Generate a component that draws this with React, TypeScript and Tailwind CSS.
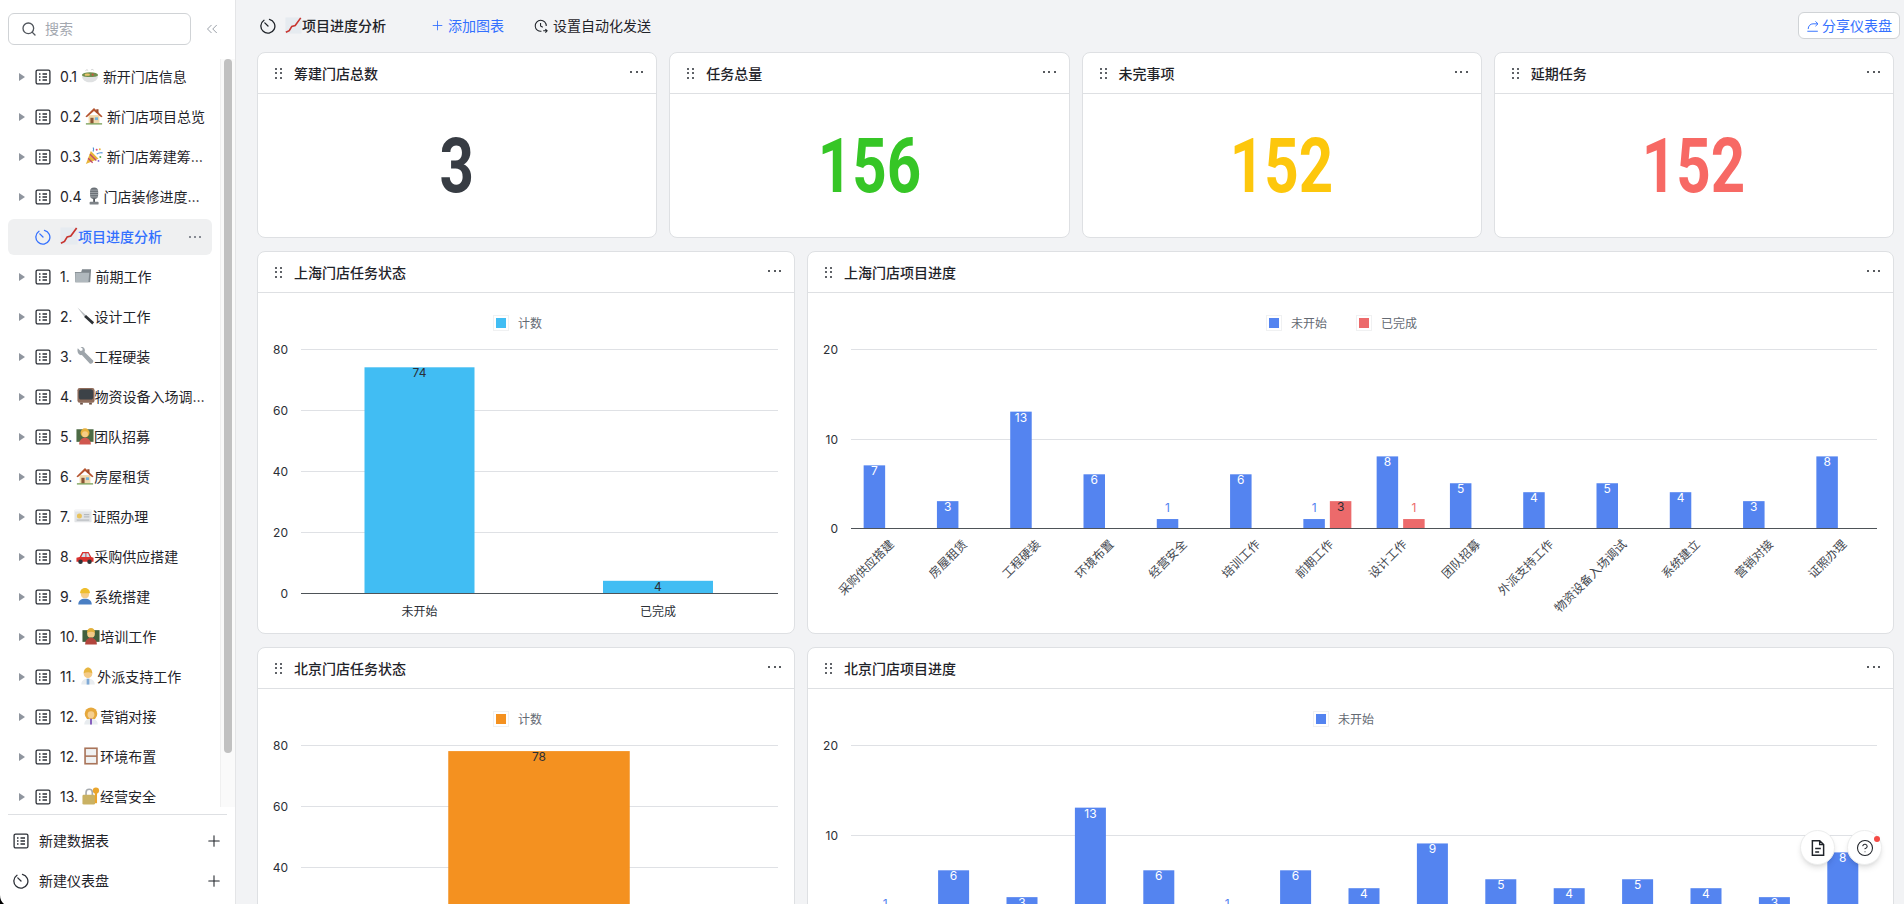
import type { ReactNode } from "react";
import { ChevronsLeft, CircleHelp, Plus, Search } from "lucide-react";

const EMOJI: Record<string, ReactNode> = {
  bowl: (
    <>
      <ellipse cx="10" cy="9" rx="9" ry="3.200" fill="#6f8f4e" />
      <ellipse cx="7" cy="8.500" rx="3" ry="1.300" fill="#e8c36a" />
      <circle cx="13" cy="8.500" r="1.200" fill="#c9573f" />
      <path d="M1 10c.5 4.500 4 7 9 7s8.500-2.500 9-7c-3 1.500-15 1.500-18 0z" fill="#dfe1e2" />
      <path d="M5 4c1-1 2-1 3 0M11 3.500c1-1 2-1 3 0" stroke="#c8c8c8" fill="none" />
    </>
  ),
  house: (
    <>
      <rect x="4" y="9" width="12" height="9.500" fill="#f1d9ad" />
      <polygon points="10,1 .5,10.500 2,11.500 10,4.500 18,11.500 19.500,10.500" fill="#b5532e" />
      <rect x="12.500" y="2.500" width="2.500" height="4" fill="#9a4a2b" />
      <rect x="6" y="12" width="3.500" height="6.500" fill="#8a5636" />
      <rect x="11" y="11.500" width="3.500" height="3" fill="#6fb4dd" />
      <rect x="1" y="18" width="18" height="1.500" fill="#7da35c" />
    </>
  ),
  party: (
    <>
      <polygon points="1,19 6.500,4.500 15,13" fill="#e9b53a" />
      <path d="M3.500 12.500l5 5M5.500 8l7 7" stroke="#c0486d" strokeWidth="1.400" />
      <path d="M9 5c1-2 1-3 0-4.500M13 8c2-2 3-2 6.500-1.500" stroke="#4c8fd6" strokeWidth="1.300" fill="none" />
      <circle cx="13" cy="3" r="1.100" fill="#d9457a" />
      <circle cx="17" cy="11" r="1.100" fill="#57b05c" />
      <circle cx="16.500" cy="2.500" r="1" fill="#e9b53a" />
      <circle cx="15" cy="15.500" r="1" fill="#7a5ad0" />
    </>
  ),
  mic: (
    <>
      <rect x="4.500" y=".5" width="9" height="13" rx="4.500" fill="#6a7076" />
      <path d="M4.500 3.500h9M4.500 6h9M4.500 8.500h9M4.500 11h9" stroke="#b5b9bd" strokeWidth=".8" />
      <rect x="8" y="13" width="2" height="4" fill="#54595e" />
      <rect x="4" y="16.500" width="10" height="3" rx="1" fill="#7d8287" />
    </>
  ),
  chart: (
    <>
      <rect x=".5" y=".5" width="19" height="19" fill="#e6ebf0" />
      <polyline points="1,18 5,16 8,11 12,10 18.500,1" fill="none" stroke="#c8352f" strokeWidth="1.900" />
    </>
  ),
  folder: (
    <>
      <path d="M1 5.500h7l1-3h10l-1 14.500H1.500z" fill="#7f878d" />
      <path d="M1.500 6.500h15.500L16 17H1.500z" fill="#b0b8bd" />
    </>
  ),
  knife: (
    <>
      <path d="M.5 .5l10.500 9.500-2 2z" fill="#b9bdc1" />
      <path d="M10 9l9 8-2 2.500-9-8.500z" fill="#2c3034" />
    </>
  ),
  wrench: (
    <path d="M2 1.500l3 3 2-.5.500-2L5 0c3-1 6 2 4.500 5.500l9.500 9.500c1 1.500-1.500 4.500-3.500 3.500L6.500 9C3.500 10 .5 6 2 1.500z" fill="#9ea5ab" />
  ),
  tv: (
    <>
      <rect x=".5" y="1" width="19" height="16.500" rx="2.500" fill="#8f6c5b" />
      <rect x="2" y="2.500" width="16" height="11.500" rx="3" fill="#3c4247" />
      <rect x="3.500" y="17.500" width="3" height="2" fill="#6b5044" />
      <rect x="13.500" y="17.500" width="3" height="2" fill="#6b5044" />
    </>
  ),
  teacherW: (
    <>
      <rect x=".5" y="2.500" width="19" height="14" fill="#4d6b45" />
      <circle cx="10" cy="6.500" r="5" fill="#e7b13d" />
      <circle cx="10" cy="8" r="3.300" fill="#f5cd85" />
      <path d="M3.500 19.500c0-5 3-7.500 6.500-7.500s6.500 2.500 6.500 7.500z" fill="#d0574e" />
    </>
  ),
  card: (
    <>
      <rect x=".5" y="3" width="19" height="14" rx="1" fill="#e2e4e6" />
      <rect x=".5" y="3" width="19" height="2" fill="#f4f5f6" />
      <circle cx="6" cy="10" r="2.800" fill="#e8c25d" />
      <path d="M11 8.500h6M11 11h6M3 14.500h14" stroke="#a9adb1" />
    </>
  ),
  car: (
    <>
      <path d="M.5 16.500v-4.500l3.500-1 3-5.500h7l3 5.500 2.500 1v4.500z" fill="#d8322f" />
      <path d="M8 7h2.500v4H5.800zM11.500 7h2l1.800 4h-3.800z" fill="#cfe3ee" />
      <circle cx="5" cy="16.500" r="2.500" fill="#2f3338" />
      <circle cx="15" cy="16.500" r="2.500" fill="#2f3338" />
    </>
  ),
  worker: (
    <>
      <path d="M2.500 19.500c0-4.500 3-6.500 7.500-6.500s7.500 2 7.500 6.500z" fill="#4a7fc4" />
      <circle cx="10" cy="8" r="4.500" fill="#f6cd8b" />
      <path d="M4.500 7c0-3.500 2-6 5.500-6s5.500 2.500 5.500 6z" fill="#efbe2e" />
    </>
  ),
  teacherM: (
    <>
      <rect x=".5" y="3.500" width="19" height="13" fill="#41603d" />
      <circle cx="10" cy="7.500" r="4.300" fill="#f4cb88" />
      <path d="M5.500 6.500c0-3.500 2-5.500 4.500-5.500s4.500 2 4.500 5.500c-3-1.500-6-1.500-9 0z" fill="#e2b13c" />
      <path d="M3.500 19.500c0-5 3-7.500 6.500-7.500s6.500 2.500 6.500 7.500z" fill="#b2453c" />
    </>
  ),
  doctorM: (
    <>
      <path d="M2.500 19.500c0-4.500 3-6.500 7.500-6.500s7.500 2 7.500 6.500z" fill="#e8ecef" />
      <rect x="8.500" y="13" width="3" height="6.500" fill="#7fa9d6" />
      <circle cx="10" cy="7.500" r="4.800" fill="#f4cb88" />
      <path d="M5.200 7c0-4 2.200-6.500 4.800-6.500s4.800 2.500 4.800 6.500c-2.700-1.500-6.700-1.500-9.600 0z" fill="#e7b540" />
    </>
  ),
  doctorW: (
    <>
      <circle cx="10" cy="7.500" r="7" fill="#e6a83c" />
      <path d="M2.500 19.500c0-4.500 3-6.500 7.500-6.500s7.500 2 7.500 6.500z" fill="#e8ecef" />
      <rect x="9" y="13" width="2" height="6.500" fill="#7d53b8" />
      <circle cx="10" cy="8.500" r="3.800" fill="#f6cf90" />
    </>
  ),
  window: (
    <>
      <rect x="2.500" y=".5" width="15" height="19" fill="#a9745a" />
      <rect x="4.300" y="2.300" width="11.400" height="7" fill="#f0f2f3" />
      <rect x="4.300" y="11" width="11.400" height="6.700" fill="#f0f2f3" />
    </>
  ),
  lock: (
    <>
      <path d="M4.500 9V6a3.500 3.500 0 0 1 7 0v3" fill="none" stroke="#a7abaf" strokeWidth="1.800" />
      <rect x=".5" y="8.500" width="14" height="11" rx="1.500" fill="#c9b163" />
      <circle cx="15.500" cy="4" r="3.500" fill="#eaa52c" />
      <rect x="14.300" y="6" width="2.400" height="12" fill="#eaa52c" />
    </>
  ),
};

function Emoji({ name, className = "h-[18px] w-[18px]" }: { name: string; className?: string }) {
  return (
    <svg viewBox="0 0 20 20" className={`inline-block align-[-3px] ${className}`}>
      {EMOJI[name]}
    </svg>
  );
}

function TableIcon({ className = "" }: { className?: string }) {
  return (
    <svg viewBox="0 0 16 16" fill="none" stroke="currentColor" className={`h-4 w-4 shrink-0 ${className}`}>
      <rect x="1.100" y="1.100" width="13.800" height="13.800" rx="1.500" strokeWidth="1.300" />
      <path d="M4 5h1.500M7.500 5H12M4 8h1.500M7.500 8H12M4 11h1.500M7.500 11H12" strokeWidth="1.300" />
    </svg>
  );
}

function DashIcon({ className = "" }: { className?: string }) {
  return (
    <svg viewBox="0 0 16 16" fill="none" stroke="currentColor" strokeWidth="1.300" strokeLinecap="round" className={`h-4 w-4 shrink-0 ${className}`}>
      <path d="M9.400 1.300A7 7 0 1 1 4 2.300" />
      <path d="M4.800 4.900L8 8" />
    </svg>
  );
}

function Caret() {
  return (
    <svg viewBox="0 0 6 8" className="h-2 w-1.5 shrink-0 fill-[#8f959e]">
      <path d="M0 0l6 4-6 4z" />
    </svg>
  );
}

const ITEMS = [
  { pre: "0.1 ", emoji: "bowl", name: " 新开门店信息" },
  { pre: "0.2 ", emoji: "house", name: " 新门店项目总览" },
  { pre: "0.3 ", emoji: "party", name: " 新门店筹建筹备进度" },
  { pre: "0.4 ", emoji: "mic", name: "门店装修进度总表" },
  { pre: "", emoji: "chart", name: "项目进度分析", active: true },
  { pre: "1. ", emoji: "folder", name: " 前期工作" },
  { pre: "2. ", emoji: "knife", name: "设计工作" },
  { pre: "3. ", emoji: "wrench", name: "工程硬装" },
  { pre: "4. ", emoji: "tv", name: "物资设备入场调试" },
  { pre: "5. ", emoji: "teacherW", name: "团队招募" },
  { pre: "6. ", emoji: "house", name: "房屋租赁" },
  { pre: "7. ", emoji: "card", name: "证照办理" },
  { pre: "8. ", emoji: "car", name: "采购供应搭建" },
  { pre: "9. ", emoji: "worker", name: "系统搭建" },
  { pre: "10. ", emoji: "teacherM", name: "培训工作" },
  { pre: "11. ", emoji: "doctorM", name: "外派支持工作" },
  { pre: "12. ", emoji: "doctorW", name: "营销对接" },
  { pre: "12. ", emoji: "window", name: "环境布置" },
  { pre: "13. ", emoji: "lock", name: "经营安全" },
];

function Sidebar() {
  return (
    <aside className="flex h-full w-[236px] shrink-0 flex-col border-r border-[#e4e5e7] bg-white">
      <div className="flex h-[59px] shrink-0 items-start pl-2 pt-[13px]">
        <div className="flex h-[32px] w-[183px] items-center gap-2 rounded-md border border-[#d0d3d6] px-3 text-[#a3a8b0]">
          <Search size={16} className="text-[#51565d]" />
          <span className="text-sm">搜索</span>
        </div>
        <ChevronsLeft size={18} strokeWidth={1.2} className="ml-3 mt-[7px] text-[#8f959e]" />
      </div>
      <div className="flex min-h-0 flex-1">
        <div className="min-w-0 flex-1 overflow-hidden pl-2 pr-2">
          {ITEMS.map((it, i) => (
            <div
              key={i}
              className={`mb-1 flex h-9 items-center rounded-md text-sm ${
                it.active ? "bg-[#eff0f1] font-medium text-[#3370ff]" : "text-[#1f2329]"
              }`}
            >
              <span className="flex w-[27px] shrink-0 justify-end pr-[10px]">{it.active ? null : <Caret />}</span>
              {it.active ? <DashIcon className="text-[#3370ff]" /> : <TableIcon className="text-[#2b2f36]" />}
              <span className="ml-[9px] w-[146px] truncate whitespace-pre">
                {it.pre}
                <Emoji name={it.emoji} />
                {it.name}
              </span>
              {it.active && (
                <span className="absolute left-[189px] flex gap-[3px]">
                  <i className="h-[2px] w-[2px] rounded-full bg-[#646a73]" />
                  <i className="h-[2px] w-[2px] rounded-full bg-[#646a73]" />
                  <i className="h-[2px] w-[2px] rounded-full bg-[#646a73]" />
                </span>
              )}
            </div>
          ))}
        </div>
        <div className="w-[15px] shrink-0 border-l border-[#f0f0f0] bg-[#fafafa] pl-[3px]">
          <div className="h-[694px] w-2 rounded-full bg-[#c1c1c1]" />
        </div>
      </div>
      <div className="h-[97px] shrink-0 bg-white px-2 pt-[7px]">
        <div className="border-t border-[#dee0e3] pt-[6px]">
          {[
            { label: "新建数据表", icon: <TableIcon className="text-[#2b2f36]" /> },
            { label: "新建仪表盘", icon: <DashIcon className="text-[#2b2f36]" /> },
          ].map((row) => (
            <div key={row.label} className="flex h-10 items-center pl-[5px] pr-[4px] text-sm text-[#1f2329]">
              {row.icon}
              <span className="ml-2.5">{row.label}</span>
              <Plus size={18} strokeWidth={1.4} className="ml-auto" />
            </div>
          ))}
        </div>
      </div>
    </aside>
  );
}

function DotsMenu() {
  return (
    <span className="flex gap-[3.500px]">
      <i className="h-[2px] w-[2px] rounded-full bg-[#1f2329]" />
      <i className="h-[2px] w-[2px] rounded-full bg-[#1f2329]" />
      <i className="h-[2px] w-[2px] rounded-full bg-[#1f2329]" />
    </span>
  );
}

function Card({ title, children, className = "" }: { title: string; children: ReactNode; className?: string }) {
  return (
    <section className={`overflow-hidden rounded-lg border border-[#dee0e3] bg-white ${className}`}>
      <header className="flex h-[41px] items-center border-b border-[#dee0e3] pl-[17px] pr-[13px]">
        <span className="grid grid-cols-2 gap-x-[3px] gap-y-[2.500px]">
          {[0, 1, 2, 3, 4, 5].map((d) => (
            <i key={d} className="h-[2px] w-[2px] rounded-full bg-[#2b2f36]" />
          ))}
        </span>
        <h3 className="ml-[12px] pt-[1px] text-sm font-medium text-[#1f2329]">{title}</h3>
        <span className="ml-auto mb-[3px]">
          <DotsMenu />
        </span>
      </header>
      {children}
    </section>
  );
}

function Stat({ title, value, color }: { title: string; value: string; color: string }) {
  return (
    <Card title={title} className="h-[186px]">
      <div className="flex h-[143px] items-center justify-center">
        <span className={`inline-block scale-x-[0.79] font-['Roboto',sans-serif] text-[76px] font-bold leading-none ${color}`}>
          {value}
        </span>
      </div>
    </Card>
  );
}

const DARK = "#2b2f36";
const AXIS = "#4e5358";
const GRID = "#dfe1e5";

function Legend({ items, cx }: { items: { label: string; color: string }[]; cx: number[] }) {
  return (
    <>
      {items.map((l, i) => (
        <g key={l.label}>
          <rect x={cx[i] - 0.5} y={22.5} width={15} height={15} fill="#fff" stroke="#f0f1f2" />
          <rect x={cx[i] + 2} y={25} width={10} height={10} fill={l.color} />
          <text x={cx[i] + 24} y={34.500} fontSize="12" fill="#646a73">
            {l.label}
          </text>
        </g>
      ))}
    </>
  );
}

function YAxis({ ticks, x0, x1, tops }: { ticks: number[]; x0: number; x1: number; tops: number[] }) {
  return (
    <>
      {ticks.map((t, i) => (
        <g key={t}>
          <line x1={x0} x2={x1} y1={tops[i]} y2={tops[i]} stroke={i === ticks.length - 1 ? AXIS : GRID} />
          <text x={x0 - 13} y={tops[i] + 4.500} fontSize="12" textAnchor="end" fill={DARK}>
            {t}
          </text>
        </g>
      ))}
    </>
  );
}

// 左侧任务状态柱状图
function StatusChart({ color, bars }: { color: string; bars: { label: string; value: number; w: number; cx: number }[] }) {
  const base = 300;
  const unit = 3.05;
  return (
    <svg width="536" height="341" className="block">
      <Legend items={[{ label: "计数", color }]} cx={[236]} />
      <YAxis ticks={[80, 60, 40, 20, 0]} x0={43} x1={520} tops={[56.5, 117.5, 178.5, 239.5, 300.5]} />
      {bars.map((b) => (
        <g key={b.label}>
          <rect x={b.cx - b.w / 2} y={base - b.value * unit} width={b.w} height={b.value * unit} fill={color} />
          <text x={b.cx} y={base - b.value * unit + 10} fontSize="12" textAnchor="middle" fill={DARK}>
            {b.value}
          </text>
          <text x={b.cx} y={323} fontSize="12" textAnchor="middle" fill={DARK}>
            {b.label}
          </text>
        </g>
      ))}
    </svg>
  );
}

const BLUE = "#5484f0";
const RED = "#ec6a6b";

type Cat = { label?: string; a: number; b?: number };

function ValueLabel({ x, top, v, color, inside }: { x: number; top: number; v: number; color: string; inside: string }) {
  const above = v <= 1;
  return (
    <text x={x} y={above ? top - 7 : top + 10} fontSize="12" textAnchor="middle" fill={above ? color : inside}>
      {v}
    </text>
  );
}

// 右侧项目进度柱状图
function ProgressChart({ cats, barW, grouped, legend, legendX }: {
  cats: Cat[];
  barW: number;
  grouped: boolean;
  legend: { label: string; color: string }[];
  legendX: number[];
}) {
  const x0 = 43;
  const step = 1026 / cats.length;
  const base = 235;
  const unit = 8.95;
  return (
    <svg width="1086" height="341" className="block">
      <Legend items={legend} cx={legendX} />
      <YAxis ticks={[20, 10, 0]} x0={x0} x1={1069} tops={[56.5, 146.5, 235.5]} />
      {cats.map((c, i) => {
        const cx = x0 + step * (i + 0.5);
        const ax = grouped ? cx - barW - 2.5 : cx - barW / 2;
        const bx = cx + 2.5;
        const aTop = base - c.a * unit;
        return (
          <g key={i}>
            <rect x={ax} y={aTop} width={barW} height={c.a * unit} fill={BLUE} />
            <ValueLabel x={ax + barW / 2} top={aTop} v={c.a} color={BLUE} inside="#fff" />
            {c.b ? (
              <>
                <rect x={bx} y={base - c.b * unit} width={barW} height={c.b * unit} fill={RED} />
                <ValueLabel x={bx + barW / 2} top={base - c.b * unit} v={c.b} color={RED} inside={DARK} />
              </>
            ) : null}
            {c.label ? (
              <text
                x={cx + 7}
                y={252}
                fontSize="12"
                textAnchor="end"
                fill="#44484f"
                transform={`rotate(-45 ${cx + 7} 252)`}
              >
                {c.label}
              </text>
            ) : null}
          </g>
        );
      })}
    </svg>
  );
}

const SH_CATS: Cat[] = [
  { label: "采购供应搭建", a: 7 },
  { label: "房屋租赁", a: 3 },
  { label: "工程硬装", a: 13 },
  { label: "环境布置", a: 6 },
  { label: "经营安全", a: 1 },
  { label: "培训工作", a: 6 },
  { label: "前期工作", a: 1, b: 3 },
  { label: "设计工作", a: 8, b: 1 },
  { label: "团队招募", a: 5 },
  { label: "外派支持工作", a: 4 },
  { label: "物资设备入场调试", a: 5 },
  { label: "系统建立", a: 4 },
  { label: "营销对接", a: 3 },
  { label: "证照办理", a: 8 },
];

const BJ_CATS: Cat[] = [1, 6, 3, 13, 6, 1, 6, 4, 9, 5, 4, 5, 4, 3, 8].map((a) => ({ a }));

function Toolbar() {
  return (
    <div className="flex h-[52px] shrink-0 items-center pl-[24px] pr-[4px] pb-[1px] text-sm text-[#1f2329]">
      <DashIcon />
      <span className="ml-[9px] flex items-center font-medium">
        <Emoji name="chart" className="h-[17px] w-[17px]" />
        <span>项目进度分析</span>
      </span>
      <span className="ml-[44px] flex items-center text-[#3370ff]">
        <Plus size={15} strokeWidth={1.4} />
        <span className="ml-[3px]">添加图表</span>
      </span>
      <span className="ml-[30px] flex items-center">
        <svg viewBox="0 0 16 16" fill="none" stroke="currentColor" strokeWidth="1.200" className="h-[14px] w-[14px]">
          <path d="M8.500 14A6.300 6.300 0 1 1 14 8" />
          <path d="M7.500 4.500V8l2.500 1.500M10.500 13.500h4M13 11.500l2 2-2 2" />
        </svg>
        <span className="ml-[5px]">设置自动化发送</span>
      </span>
      <button className="ml-auto flex h-[27px] w-[102px] items-center justify-center gap-[2px] rounded-md border border-[#d0d3d6] bg-white text-[#3370ff]">
        <svg viewBox="0 0 16 16" fill="none" stroke="currentColor" strokeWidth="1.100" className="h-[14px] w-[14px]">
          <path d="M1.500 14h12M2.500 11.500c0-3.500 2.500-6 5.500-6h5.500M10.800 2.800l2.900 2.700-2.900 2.700" />
        </svg>
        分享仪表盘
      </button>
    </div>
  );
}

export default function App() {
  return (
    <div className="relative flex h-screen w-full overflow-hidden bg-[#f2f3f5] font-['Inter','Noto_Sans_CJK_SC',sans-serif]">
      <Sidebar />
      <main className="min-w-0 flex-1 overflow-hidden">
        <Toolbar />
        <div className="flex flex-col gap-[13px] pl-[21px] pr-[10px]">
          <div className="grid grid-cols-4 gap-3">
            <Stat title="筹建门店总数" value="3" color="text-[#373c43]" />
            <Stat title="任务总量" value="156" color="text-[#36c626]" />
            <Stat title="未完事项" value="152" color="text-[#fdc70c]" />
            <Stat title="延期任务" value="152" color="text-[#f76964]" />
          </div>
          <div className="flex gap-3">
            <Card title="上海门店任务状态" className="h-[383px] w-[538px] shrink-0">
              <StatusChart
                color="#41bdf3"
                bars={[
                  { label: "未开始", value: 74, w: 110, cx: 161.5 },
                  { label: "已完成", value: 4, w: 110, cx: 400 },
                ]}
              />
            </Card>
            <Card title="上海门店项目进度" className="h-[383px] min-w-0 flex-1">
              <ProgressChart
                cats={SH_CATS}
                barW={21.5}
                grouped
                legend={[
                  { label: "未开始", color: BLUE },
                  { label: "已完成", color: RED },
                ]}
                legendX={[459, 549]}
              />
            </Card>
          </div>
          <div className="flex gap-3">
            <Card title="北京门店任务状态" className="h-[383px] w-[538px] shrink-0">
              <StatusChart color="#f49120" bars={[{ label: "未开始", value: 78, w: 181.5, cx: 281 }]} />
            </Card>
            <Card title="北京门店项目进度" className="h-[383px] min-w-0 flex-1">
              <ProgressChart cats={BJ_CATS} barW={31} grouped={false} legend={[{ label: "未开始", color: BLUE }]} legendX={[506]} />
            </Card>
          </div>
        </div>
      </main>
      <div className="absolute bottom-[39px] right-[22px] flex gap-3">
        <button className="flex h-[35px] w-[35px] items-center justify-center rounded-full border border-[#eceded] bg-white shadow-md">
          <svg viewBox="0 0 16 16" fill="none" stroke="#1f2329" strokeWidth="1.300" className="h-[18px] w-[18px]">
            <path d="M3 1.500h6.500l3.500 3.500v9.500H3zM9.500 1.500V5H13M5.500 8.500h5M5.500 11.500h3.500" />
          </svg>
        </button>
        <button className="relative flex h-[35px] w-[35px] items-center justify-center rounded-full border border-[#eceded] bg-white shadow-md">
          <CircleHelp size={18} strokeWidth={1.4} className="text-[#1f2329]" />
          <i className="absolute right-[1px] top-[5px] h-[6px] w-[6px] rounded-full bg-[#f54a45]" />
        </button>
      </div>
      <svg viewBox="0 0 4 9" className="absolute bottom-0 left-0 h-[9px] w-1 fill-black">
        <path d="M0 0c0 4 1.500 7 4 9H0z" />
      </svg>
    </div>
  );
}
